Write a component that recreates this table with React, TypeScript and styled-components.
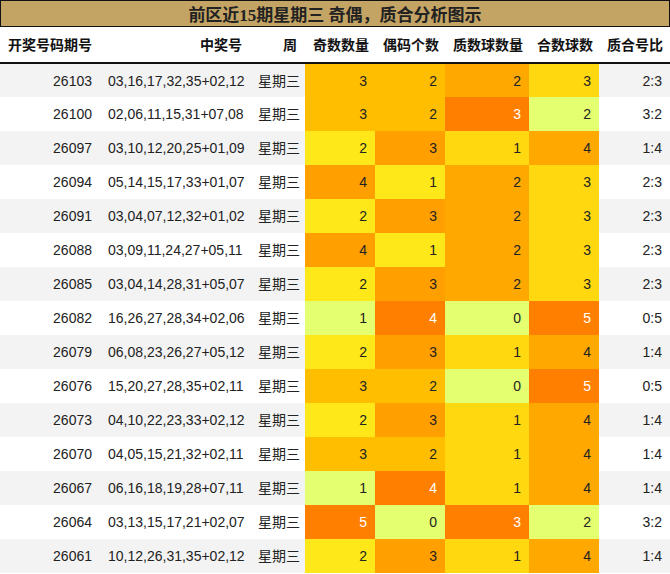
import React from "react";
import styled, { createGlobalStyle } from "styled-components";

const Global = createGlobalStyle`
  html, body { margin: 0; padding: 0; background: #fff; }
  body { font-family: "Liberation Sans", "Noto Sans CJK SC", sans-serif; }
`;

const Page = styled.div`
  width: 670px;
  display: flex;
  flex-direction: column;
`;

const TitleBar = styled.div`
  height: 25px;
  border: 1px solid #111;
  background: #c4a464;
  display: flex;
  align-items: center;
  justify-content: center;
  font-family: "Liberation Serif", "Noto Sans CJK SC", serif;
  font-weight: bold;
  font-size: 17px;
  color: #222;
`;

const Table = styled.table`
  width: 670px;
  border-collapse: collapse;
  table-layout: fixed;
  font-size: 14px;
  line-height: 18px;
  color: #222;
`;

const HeadCell = styled.th<{ $align?: string }>`
  height: 36px;
  padding: 0 8px;
  text-align: ${(p) => p.$align || "right"};
  font-weight: bold;
  font-size: 14px;
  color: #111;
  border-bottom: 2px solid #111;
  white-space: nowrap;
  background: #fff;
  box-sizing: border-box;
`;

const Row = styled.tr<{ $odd: boolean }>`
  background: ${(p) => (p.$odd ? "#f3f3f3" : "#ffffff")};
  height: 34px;
`;

const Cell = styled.td`
  height: 34px;
  padding: 0 8px;
  box-sizing: border-box;
  text-align: right;
  white-space: nowrap;
  vertical-align: middle;
`;

const HeatCell = styled(Cell)<{ $bg: string; $light: boolean }>`
  background: ${(p) => p.$bg};
  color: ${(p) => (p.$light ? "#fff" : "#222")};
`;

const data: [string, string, number, number, number, number, string][] = [
  ["26103", "03,16,17,32,35+02,12", 3, 2, 2, 3, "2:3"],
  ["26100", "02,06,11,15,31+07,08", 3, 2, 3, 2, "3:2"],
  ["26097", "03,10,12,20,25+01,09", 2, 3, 1, 4, "1:4"],
  ["26094", "05,14,15,17,33+01,07", 4, 1, 2, 3, "2:3"],
  ["26091", "03,04,07,12,32+01,02", 2, 3, 2, 3, "2:3"],
  ["26088", "03,09,11,24,27+05,11", 4, 1, 2, 3, "2:3"],
  ["26085", "03,04,14,28,31+05,07", 2, 3, 2, 3, "2:3"],
  ["26082", "16,26,27,28,34+02,06", 1, 4, 0, 5, "0:5"],
  ["26079", "06,08,23,26,27+05,12", 2, 3, 1, 4, "1:4"],
  ["26076", "15,20,27,28,35+02,11", 3, 2, 0, 5, "0:5"],
  ["26073", "04,10,22,23,33+02,12", 2, 3, 1, 4, "1:4"],
  ["26070", "04,05,15,21,32+02,11", 3, 2, 1, 4, "1:4"],
  ["26067", "06,16,18,19,28+07,11", 1, 4, 1, 4, "1:4"],
  ["26064", "03,13,15,17,21+02,07", 5, 0, 3, 2, "3:2"],
  ["26061", "10,12,26,31,35+02,12", 2, 3, 1, 4, "1:4"],
];

const scale5 = ["#e4ff70", "#ffe81a", "#ffbf00", "#ff9f00", "#ff8000"];
const scale4 = ["#e4ff70", "#ffd80f", "#ffa800", "#ff8000"];

function heat(values: number[], v: number) {
  const min = Math.min(...values);
  const max = Math.max(...values);
  const steps = max - min;
  const scale = steps === 4 ? scale5 : scale4;
  const idx = Math.round(((v - min) / (max - min || 1)) * (scale.length - 1));
  return { bg: scale[idx], light: idx === scale.length - 1 };
}

export default function App() {
  const cols = [2, 3, 4, 5].map((c) => data.map((r) => r[c] as number));
  return (
    <Page>
      <Global />
      <TitleBar>前区近15期星期三 奇偶，质合分析图示</TitleBar>
      <Table>
        <colgroup>
          <col style={{ width: 100 }} />
          <col style={{ width: 150 }} />
          <col style={{ width: 55 }} />
          <col style={{ width: 70 }} />
          <col style={{ width: 70 }} />
          <col style={{ width: 84 }} />
          <col style={{ width: 70 }} />
          <col style={{ width: 71 }} />
        </colgroup>
        <thead>
          <tr>
            <HeadCell $align="left">开奖号码期号</HeadCell>
            <HeadCell>中奖号</HeadCell>
            <HeadCell>周</HeadCell>
            <HeadCell>奇数数量</HeadCell>
            <HeadCell>偶码个数</HeadCell>
            <HeadCell>质数球数量</HeadCell>
            <HeadCell>合数球数</HeadCell>
            <HeadCell>质合号比</HeadCell>
          </tr>
        </thead>
        <tbody>
          {data.map((r, i) => (
            <Row key={r[0]} $odd={i % 2 === 0}>
              <Cell>{r[0]}</Cell>
              <Cell>{r[1]}</Cell>
              <Cell>星期三</Cell>
              {[2, 3, 4, 5].map((c, k) => {
                const h = heat(cols[k], r[c] as number);
                return (
                  <HeatCell key={c} $bg={h.bg} $light={h.light}>
                    {r[c]}
                  </HeatCell>
                );
              })}
              <Cell>{r[6]}</Cell>
            </Row>
          ))}
        </tbody>
      </Table>
    </Page>
  );
}
